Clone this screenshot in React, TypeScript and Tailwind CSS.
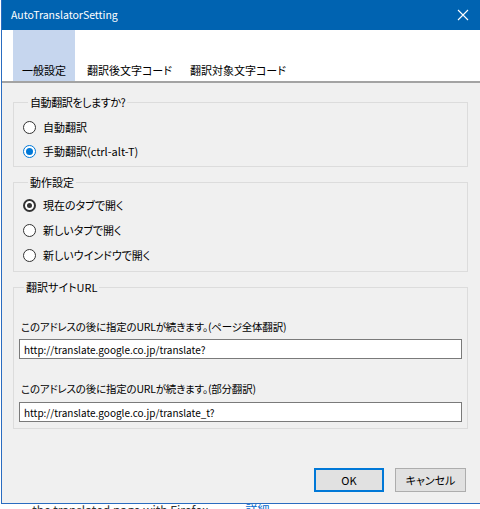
import React, { useState } from "react";

// ラジオボタン
const Radio: React.FC<{
  label: string;
  checked: boolean;
  dark?: boolean;
  onClick: () => void;
}> = ({ label, checked, dark, onClick }) => (
  <div className="flex items-center h-[20px] cursor-default" onClick={onClick}>
    <span
      className={`w-[13px] h-[13px] rounded-full border bg-white flex items-center justify-center ${
        checked ? (dark ? "border-[#333] border-[2px]" : "border-[#0078d7]") : "border-[#333]"
      }`}
    >
      {checked && (
        <span
          className={`rounded-full ${dark ? "w-[5px] h-[5px] bg-[#333]" : "w-[7px] h-[7px] bg-[#0078d7]"}`}
        />
      )}
    </span>
    <span className="ml-[7px]">{label}</span>
  </div>
);

const App: React.FC = () => {
  const [mode, setMode] = useState(1);
  const [open, setOpen] = useState(0);
  const [url1, setUrl1] = useState("http://translate.google.co.jp/translate?");
  const [url2, setUrl2] = useState("http://translate.google.co.jp/translate_t?");

  return (
    <div className="w-[480px] h-[509px] bg-white overflow-hidden text-[11px] text-black font-['Noto_Sans_CJK_JP','Noto_Sans',sans-serif] [font-feature-settings:'palt']">
      <div className="ml-[1px] w-[479px] h-[504px] border-l border-b border-[#2a6cc0] flex flex-col">
        {/* タイトルバー */}
        <div className="h-[30px] bg-[#0063b1] flex items-center justify-between pl-[9px] pr-[9px] text-white">
          <span className="text-[10.5px]">AutoTranslatorSetting</span>
          <svg width="12" height="12" viewBox="0 0 12 12" className="mr-[2px]">
            <path d="M1 1 L11 11 M11 1 L1 11" stroke="white" strokeWidth="1.1" />
          </svg>
        </div>

        {/* タブ */}
        <div className="h-[53px] bg-white flex items-stretch pl-[11px] border-b-2 border-[#a3a3a3]">
          <div className="bg-[#c6d6ee] w-[62px] flex items-end justify-center pb-[3px]">一般設定</div>
          <div className="flex items-end pb-[3px] ml-[12px]">翻訳後文字コード</div>
          <div className="flex items-end pb-[3px] ml-[18px]">翻訳対象文字コード</div>
        </div>

        {/* 本体 */}
        <div className="flex-1 bg-[#f0f0f0] pl-[11px] pr-[12px] flex flex-col">
          <fieldset className="mt-[11px] h-[73px] border border-[#dcdcdc] pl-[9px]">
            <legend className="ml-[5px] px-[2px] leading-[16px] tracking-[-0.4px]">自動翻訳をしますか?</legend>
            <div className="pt-[7px] flex flex-col gap-[4px]">
              <Radio label="自動翻訳" checked={mode === 0} onClick={() => setMode(0)} />
              <Radio label="手動翻訳(ctrl-alt-T)" checked={mode === 1} onClick={() => setMode(1)} />
            </div>
          </fieldset>

          <fieldset className="mt-[7px] h-[98px] border border-[#dcdcdc] pl-[9px]">
            <legend className="ml-[5px] px-[2px] leading-[16px]">動作設定</legend>
            <div className="pt-[5px] flex flex-col gap-[5px]">
              <Radio label="現在のタブで開く" dark checked={open === 0} onClick={() => setOpen(0)} />
              <Radio label="新しいタブで開く" dark checked={open === 1} onClick={() => setOpen(1)} />
              <Radio label="新しいウインドウで開く" dark checked={open === 2} onClick={() => setOpen(2)} />
            </div>
          </fieldset>

          <fieldset className="mt-[7px] h-[150px] border border-[#dcdcdc] px-[5px]">
            <legend className="ml-[5px] px-[2px] leading-[16px]">翻訳サイトURL</legend>
            <div className="pt-[24px] pl-[2px] leading-[16px] text-[10.5px] tracking-[-0.2px]">
              このアドレスの後に指定のURLが続きます。(ページ全体翻訳)
            </div>
            <input
              value={url1}
              onChange={(e) => setUrl1(e.target.value)}
              className="mt-[4px] w-full h-[20px] bg-white border border-[#7a7a7a] px-[4px] outline-none text-[10px]"
            />
            <div className="mt-[22px] pl-[2px] leading-[16px] text-[10.5px] tracking-[-0.2px]">
              このアドレスの後に指定のURLが続きます。(部分翻訳)
            </div>
            <input
              value={url2}
              onChange={(e) => setUrl2(e.target.value)}
              className="mt-[5px] w-full h-[20px] bg-white border border-[#7a7a7a] px-[4px] outline-none text-[10px]"
            />
          </fieldset>

          <div className="mt-[39px] flex justify-end gap-[11px] pr-[2px]">
            <button className="w-[70px] h-[24px] bg-[#e1e1e1] border-2 border-[#0078d7]">OK</button>
            <button className="w-[71px] h-[24px] bg-[#e1e1e1] border border-[#adadad]">キャンセル</button>
          </div>
        </div>
      </div>

      {/* 背景のテキスト */}
      <div className="h-[5px] overflow-hidden flex pl-[16px] text-[12px] leading-[12px] text-[#333]">
        <span>·· the translated page with Firefox ·</span>
        <span className="ml-[28px] text-[#0066cc]">詳細</span>
      </div>
    </div>
  );
};

export default App;
